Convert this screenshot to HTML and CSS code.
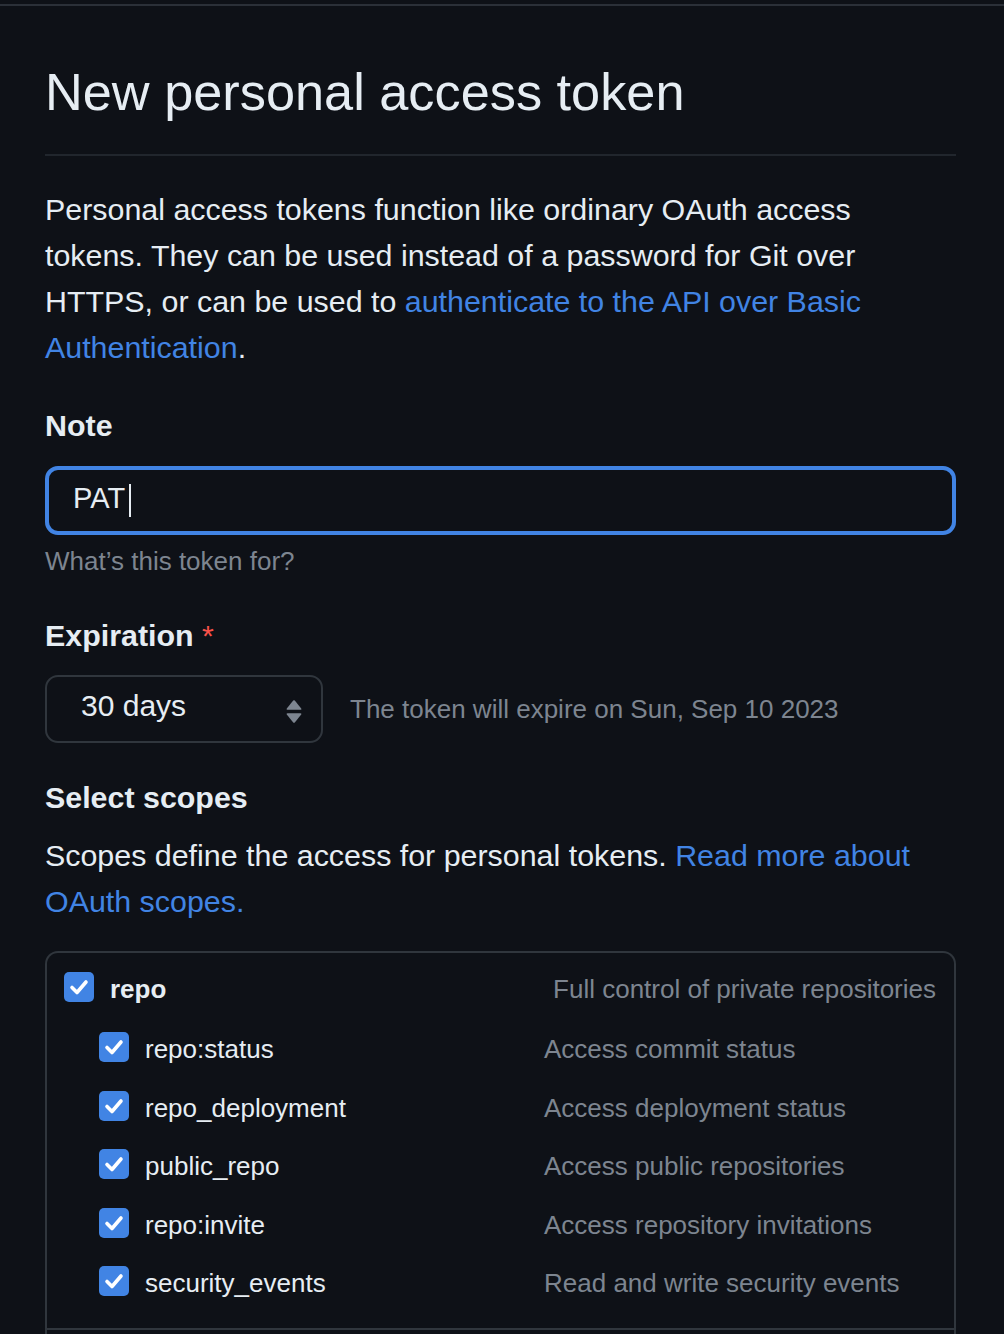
FILE: index.html
```html
<!DOCTYPE html>
<html lang="en">
<head>
<meta charset="utf-8">
<title>New personal access token</title>
<link rel="stylesheet" href="styles.css">
</head>
<body>
<div class="topline"></div>
<main class="page">
  <h1 class="title">New personal access token</h1>
  <hr class="rule">
  <p class="intro">Personal access tokens function like ordinary OAuth access tokens. They can be used instead of a password for Git over HTTPS, or can be used to <a href="#" class="link">authenticate to the API over Basic Authentication</a>.</p>

  <div class="label label-note">Note</div>
  <div class="input"><span class="input-text">PAT</span><span class="caret"></span></div>
  <div class="hint">What’s this token for?</div>

  <div class="label label-exp">Expiration <span class="req">*</span></div>
  <div class="exp-row">
    <div class="select">
      <span class="select-text">30 days</span>
      <svg class="select-arrows" width="16" height="23" viewBox="0 0 16 23">
        <path d="M7.2 0.6 Q8 -0.2 8.8 0.6 L15.2 8.6 Q15.8 9.8 14.4 9.8 L1.6 9.8 Q0.2 9.8 0.8 8.6 Z" fill="#7d8590"/>
        <path d="M7.2 22.4 Q8 23.2 8.8 22.4 L15.2 14.4 Q15.8 13.2 14.4 13.2 L1.6 13.2 Q0.2 13.2 0.8 14.4 Z" fill="#7d8590"/>
      </svg>
    </div>
    <div class="exp-note">The token will expire on Sun, Sep 10 2023</div>
  </div>

  <div class="label label-scopes">Select scopes</div>
  <p class="scopes-desc">Scopes define the access for personal tokens. <a href="#" class="link">Read more about OAuth scopes.</a></p>

  <div class="scope-box">
    <div class="scope-group">
      <div class="scope-row scope-parent">
        <span class="cb"><svg width="30" height="30" viewBox="0 0 30 30"><path d="M8 15.5 L13 20.5 L22 10" fill="none" stroke="#fff" stroke-width="3.6" stroke-linecap="round" stroke-linejoin="round"/></svg></span>
        <span class="scope-name parent-name">repo</span>
        <span class="scope-desc parent-desc">Full control of private repositories</span>
      </div>
      <div class="sub-list">
        <div class="scope-row scope-sub">
          <span class="sub-label"><span class="cb"><svg width="30" height="30" viewBox="0 0 30 30"><path d="M8 15.5 L13 20.5 L22 10" fill="none" stroke="#fff" stroke-width="3.6" stroke-linecap="round" stroke-linejoin="round"/></svg></span><span class="scope-name">repo:status</span></span>
          <span class="scope-desc">Access commit status</span>
        </div>
        <div class="scope-row scope-sub">
          <span class="sub-label"><span class="cb"><svg width="30" height="30" viewBox="0 0 30 30"><path d="M8 15.5 L13 20.5 L22 10" fill="none" stroke="#fff" stroke-width="3.6" stroke-linecap="round" stroke-linejoin="round"/></svg></span><span class="scope-name">repo_deployment</span></span>
          <span class="scope-desc">Access deployment status</span>
        </div>
        <div class="scope-row scope-sub">
          <span class="sub-label"><span class="cb"><svg width="30" height="30" viewBox="0 0 30 30"><path d="M8 15.5 L13 20.5 L22 10" fill="none" stroke="#fff" stroke-width="3.6" stroke-linecap="round" stroke-linejoin="round"/></svg></span><span class="scope-name">public_repo</span></span>
          <span class="scope-desc">Access public repositories</span>
        </div>
        <div class="scope-row scope-sub">
          <span class="sub-label"><span class="cb"><svg width="30" height="30" viewBox="0 0 30 30"><path d="M8 15.5 L13 20.5 L22 10" fill="none" stroke="#fff" stroke-width="3.6" stroke-linecap="round" stroke-linejoin="round"/></svg></span><span class="scope-name">repo:invite</span></span>
          <span class="scope-desc">Access repository invitations</span>
        </div>
        <div class="scope-row scope-sub">
          <span class="sub-label"><span class="cb"><svg width="30" height="30" viewBox="0 0 30 30"><path d="M8 15.5 L13 20.5 L22 10" fill="none" stroke="#fff" stroke-width="3.6" stroke-linecap="round" stroke-linejoin="round"/></svg></span><span class="scope-name">security_events</span></span>
          <span class="scope-desc">Read and write security events</span>
        </div>
      </div>
    </div>
    <div class="scope-group scope-next"></div>
  </div>
</main>
</body>
</html>
```

FILE: styles.css
```css
html, body {
  margin: 0;
  padding: 0;
  background: #0e1117;
  height: 1334px;
  overflow: hidden;
}
body {
  font-family: "Liberation Sans", Arial, sans-serif;
  color: #e6edf3;
  font-size: 30.4px;
  line-height: 46px;
}
.topline {
  margin-top: 4px;
  height: 2px;
  background: #2b3038;
}
.page {
  padding: 0 48px 0 45px;
}
.title {
  margin: 53.5px 0 0;
  font-size: 52.3px;
  line-height: 65px;
  font-weight: 400;
  color: #e6edf3;
}
.rule {
  margin: 29.5px 0 0;
  border: 0;
  height: 2px;
  background: #21262d;
}
.intro {
  margin: 29.5px 0 0;
}
.link {
  color: #4184e4;
  text-decoration: none;
}
.label {
  font-weight: 700;
}
.label-note { margin-top: 32px; }
.label-exp { margin-top: 31px; }
.label-scopes { margin-top: 30.5px; }
.req {
  color: #f85149;
  font-weight: 400;
}
.input {
  box-sizing: border-box;
  margin-top: 18.5px;
  height: 69px;
  border: 4px solid #4184e4;
  border-radius: 13px;
  padding: 0 0 5px 24px;
  font-size: 29px;
  line-height: 56px;
  display: flex;
  align-items: center;
}
.input-text {
  color: #e6edf3;
}
.caret {
  display: inline-block;
  width: 2px;
  height: 33px;
  background: #e6edf3;
  margin-left: 4px;
  margin-top: 4px;
}
.hint {
  margin-top: 6.5px;
  font-size: 26px;
  line-height: 39px;
  color: #7d8590;
}
.exp-row {
  margin-top: 17.5px;
  display: flex;
  align-items: flex-start;
}
.select {
  box-sizing: border-box;
  width: 278px;
  height: 68px;
  border: 2px solid #30363d;
  border-radius: 13px;
  padding: 0 19px 0 34px;
  display: flex;
  align-items: center;
  font-size: 30px;
  line-height: 55px;
}
.select-text {
  padding-bottom: 7px;
  line-height: 55px;
}
.select-arrows {
  margin-left: auto;
  margin-top: 4px;
}
.exp-note {
  margin: 14.5px 0 0 27px;
  font-size: 26px;
  line-height: 39px;
  color: #7d8590;
}
.scopes-desc {
  margin: 12px 0 0;
}
.scope-box {
  margin-top: 27.5px;
  border: 2px solid #30363d;
  border-bottom: 0;
  border-radius: 13px 13px 0 0;
}
.scope-group {
  padding: 19px 18px 32px 17px;
  border-bottom: 2px solid #30363d;
}
.scope-next {
  height: 4px;
  border-bottom: 0;
  padding: 0;
}
.scope-row {
  display: flex;
  align-items: center;
  height: 30px;
  font-size: 26px;
}
.cb {
  flex: none;
  width: 30px;
  height: 30px;
  border-radius: 5px;
  background: #4184e4;
  display: inline-flex;
}
.scope-name {
  margin-left: 16px;
  padding-top: 4px;
  line-height: 30px;
  color: #e6edf3;
}
.parent-name {
  font-weight: 700;
}
.scope-desc {
  padding-top: 4px;
  line-height: 30px;
  color: #7d8590;
}
.parent-desc {
  margin-left: auto;
}
.sub-list {
  margin: 30px 0 0 35px;
  display: flex;
  flex-direction: column;
  gap: 28.5px;
}
.sub-label {
  width: 445px;
  display: flex;
  align-items: center;
}
```
